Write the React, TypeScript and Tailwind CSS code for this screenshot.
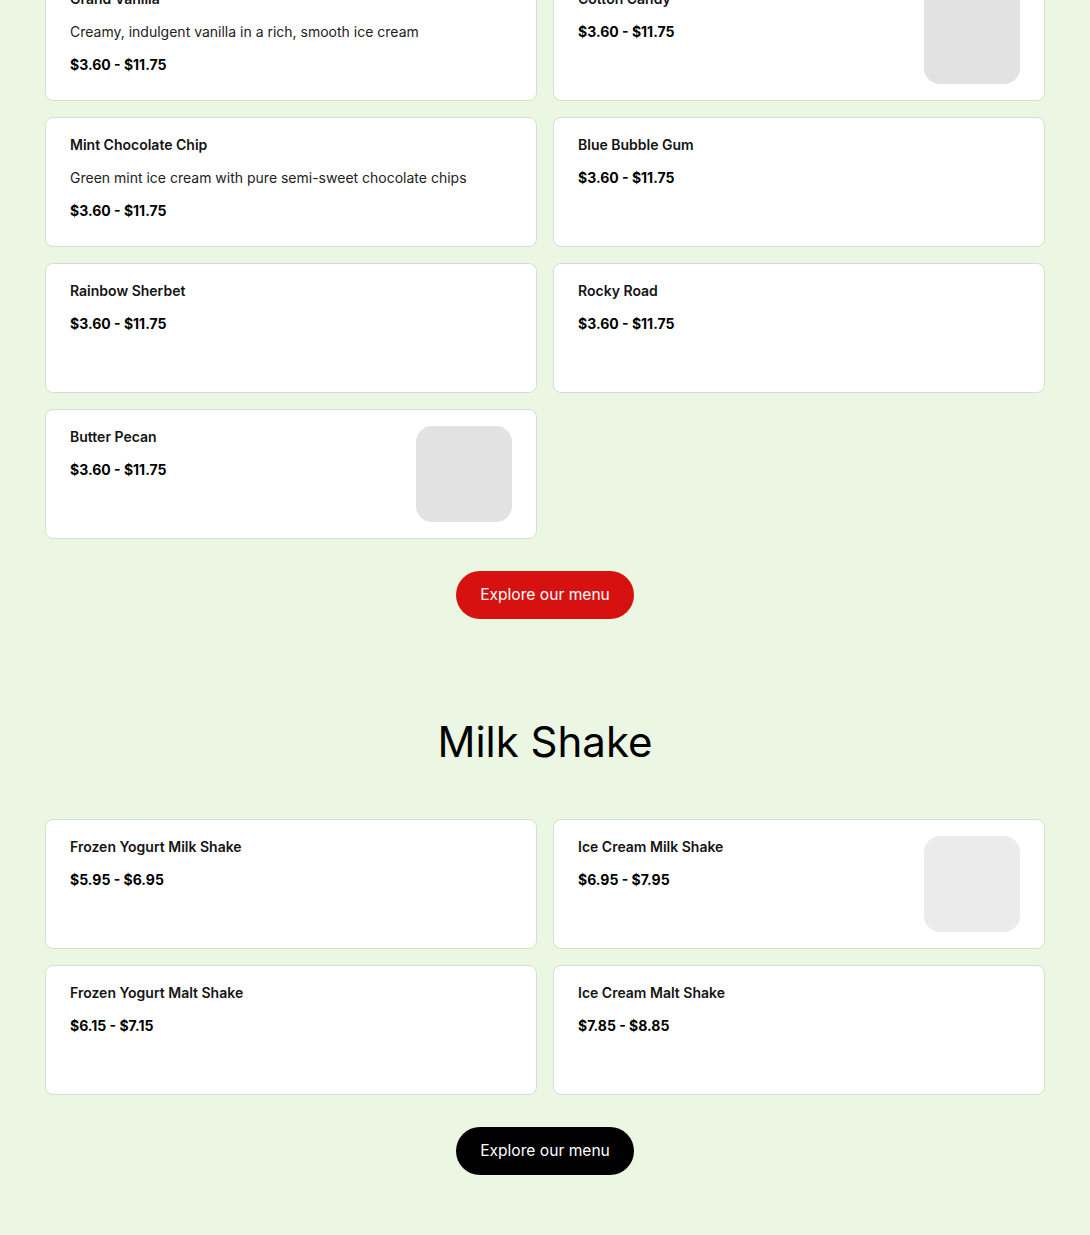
import React from "react";

type Item = {
    name: string;
    price: string;
    desc?: string;
    image?: string;
};

const iceCream: Item[] = [
    { name: "Grand Vanilla", desc: "Creamy, indulgent vanilla in a rich, smooth ice cream", price: "$3.60 - $11.75" },
    { name: "Cotton Candy", price: "$3.60 - $11.75", image: "bg-[#e2e2e2]" },
    { name: "Mint Chocolate Chip", desc: "Green mint ice cream with pure semi-sweet chocolate chips", price: "$3.60 - $11.75" },
    { name: "Blue Bubble Gum", price: "$3.60 - $11.75" },
    { name: "Rainbow Sherbet", price: "$3.60 - $11.75" },
    { name: "Rocky Road", price: "$3.60 - $11.75" },
    { name: "Butter Pecan", price: "$3.60 - $11.75", image: "bg-[#e2e2e2]" },
];

const shakes: Item[] = [
    { name: "Frozen Yogurt Milk Shake", price: "$5.95 - $6.95" },
    { name: "Ice Cream Milk Shake", price: "$6.95 - $7.95", image: "bg-[#ebebeb]" },
    { name: "Frozen Yogurt Malt Shake", price: "$6.15 - $7.15" },
    { name: "Ice Cream Malt Shake", price: "$7.85 - $8.85" },
];

function MenuCard({ item }: { item: Item }) {
    return (
        <div className="flex h-[130px] justify-between rounded-lg border border-[#d6dfcd] bg-white py-4 pl-6 pr-6">
            <div className="flex flex-col gap-3 text-sm leading-[21px] text-[#141414]">
                <span className="font-semibold">{item.name}</span>
                {item.desc && <span className="text-[#222]">{item.desc}</span>}
                <span className="font-bold text-black">{item.price}</span>
            </div>
            {item.image && <div className={`h-24 w-24 shrink-0 rounded-2xl ${item.image}`} />}
        </div>
    );
}

function ExploreButton({ dark }: { dark?: boolean }) {
    return (
        <div className="mt-8 flex justify-center">
            <button
                className={`h-12 rounded-full px-6 text-[15.6px] text-white ${dark ? "bg-black" : "bg-[#d71010]"}`}
            >
                Explore our menu
            </button>
        </div>
    );
}

export default function App() {
    return (
        <div className="min-h-screen bg-[#ebf7e2] font-['Inter',sans-serif] px-[45px] pb-[64px]">
            {/* Ice cream section, scrolled partway */}
            <section className="mt-[-29px]">
                <div className="grid grid-cols-2 gap-4">
                    {iceCream.map((item) => (
                        <MenuCard key={item.name} item={item} />
                    ))}
                </div>
                <ExploreButton />
            </section>

            <section className="pt-[98px]">
                <h2 className="mb-[52px] text-center text-[42px] leading-[50px] font-normal text-black">Milk Shake</h2>
                <div className="grid grid-cols-2 gap-4">
                    {shakes.map((item) => (
                        <MenuCard key={item.name} item={item} />
                    ))}
                </div>
                <ExploreButton dark />
            </section>
        </div>
    );
}
